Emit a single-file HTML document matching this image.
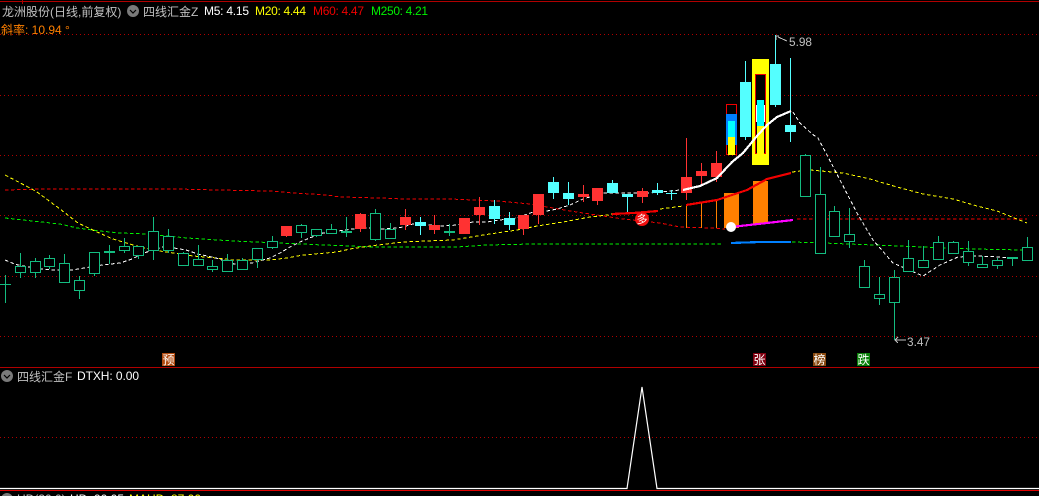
<!DOCTYPE html>
<html><head><meta charset="utf-8"><style>
html,body{margin:0;padding:0;background:#000;width:1039px;height:496px;overflow:hidden}
svg{display:block;position:absolute;left:0;top:0}
text{font-family:"Liberation Sans","WenQuanYi Zen Hei","Noto Sans CJK SC",sans-serif;font-size:12px}
.c{shape-rendering:crispEdges}
.d{fill:none;stroke:#b00000;stroke-width:1;stroke-dasharray:1 3}
.m{fill:none;stroke-width:1;stroke-dasharray:3.5 2.5;shape-rendering:crispEdges}
.s{fill:none;stroke-width:2.2;stroke-linejoin:round}
</style></head><body>
<svg width="1039" height="496" viewBox="0 0 1039 496">
<g class="c">
<path d="M0 1.5H1039" stroke="#b00000" fill="none"/>
<path d="M22.5 0V4" stroke="#b00000" fill="none"/>
<path class="d" d="M0 34.5H1039M0 95.5H1039M0 155.5H1039M0 215.5H1039M0 276.5H1039M0 336.5H1039M0 437.5H1039"/>
<path d="M0 367.5H1039" stroke="#b00000" fill="none"/>
<path d="M0 490.5H1039" stroke="#e00000" fill="none" stroke-width="1"/>
</g>
<polyline class="m" stroke="#f00000" points="5,190 42,189 117,189 177,189 217,190 270,191 293,193 327,195 340,197 380,198 403,199 450,199 497,201 530,204 547,207 570,211 610,217 623,219 660,223 680,227 710,228 725,229"/>
<polyline class="m" stroke="#f00000" points="797,219 860,219 957,219 990,219 1027,219"/>
<polyline class="m" stroke="#00f000" points="5,218 23,220 60,224 77,228 100,231 120,233 147,234 187,238 233,241 280,243 323,245 353,246 370,247 457,247 487,245 533,244 610,244 723,244"/>
<polyline class="m" stroke="#00f000" points="792,242 823,243 873,245 923,247 973,249 1023,250"/>
<polyline class="m" stroke="#ffff00" points="5,175 30,188 37,192 60,209 78,223 97,232 113,239 133,245 153,250 173,253 193,256 217,258 233,260 263,260 270,260 287,258 303,255 337,252 350,249 370,246 403,242 427,241 453,240 483,235 517,230 537,226 563,222 590,217 608,215 612,214"/>
<polyline class="m" stroke="#ffff00" points="660,209 683,206"/>
<polyline class="m" stroke="#ffff00" points="792,172 810,170 843,173 870,179 897,187 923,194 953,199 977,206 997,211 1027,223"/>
<polyline class="m" stroke="#ffffff" stroke-dasharray="3 3" points="5,260 12,263 18,265 29,267 42,269 54,270 72,270 84,268 102,265 120,263 132,259 144,253 162,247 174,248 186,250 198,254 216,258 234,264 252,263 270,258 282,252 288,248 300,242 312,237 323,233 353,229 367,228 383,229 397,228 403,227 413,224 443,226 457,225 473,222 487,222 500,220 517,218 533,212 547,211 557,209 570,205 583,199 603,193 620,193 650,193 680,190"/>
<polyline class="m" stroke="#ffffff" stroke-dasharray="2 4" points="793,112 800,123 812,134 818,138 827,155 840,180 857,213 873,240 893,263 923,276 940,265 958,257 977,256 1000,257 1020,259"/>
<g class="c">
<!-- orange bars -->
<path d="M686.5 205V228M701.5 202V228M716.5 200V228" stroke="#ff8000" fill="none"/>
<rect x="724" y="193" width="15" height="35" fill="#ff8000"/>
<rect x="753" y="181" width="15" height="43" fill="#ff8000"/>
<!-- green wicks -->
<path fill="none" stroke="#14bc80" d="M5.5 275V303M20.5 253V278M35.5 258V278M49.5 255V269M64.5 254V282M79.5 276V299M94.5 252V276M109.5 245V264M124.5 238V253M138.5 246V259M153.5 217V260M168.5 229V253M183.5 252V266M198.5 245V265M212.5 260V272M227.5 254V272M242.5 258V269M257.5 248V268M272.5 236V249M301.5 224V238M316.5 229V237M331.5 224V234M346.5 217V237M375.5 209V241M390.5 223V238M449.5 224V236M805.5 154V196M820.5 167V253M834.5 206V237M849.5 208V248M864.5 260V287M879.5 277V305M894.5 270V340M908.5 240V271M923.5 246V267M938.5 236V259M953.5 241V254M968.5 241V266M982.5 256V267M997.5 258V269M1012.5 257V266M1027.5 237V260"/>
<path d="M0 284.5H11" stroke="#14bc80"/>
<g fill="#000" stroke="#14bc80">
<rect x="15.500" y="266.500" width="10" height="6"/><rect x="30.500" y="261.500" width="10" height="11"/><rect x="44.500" y="258.500" width="10" height="8"/><rect x="59.500" y="263.500" width="10" height="19"/><rect x="74.500" y="280.500" width="10" height="10"/><rect x="89.500" y="252.500" width="10" height="21"/><rect x="119.500" y="246.500" width="10" height="4"/><rect x="133.500" y="246.500" width="10" height="9"/><rect x="148.500" y="231.500" width="10" height="19"/><rect x="163.500" y="236.500" width="10" height="14"/><rect x="178.500" y="253.500" width="10" height="12"/><rect x="193.500" y="259.500" width="10" height="6"/><rect x="207.500" y="266.500" width="10" height="3"/><rect x="222.500" y="260.500" width="10" height="11"/><rect x="237.500" y="260.500" width="10" height="9"/><rect x="252.500" y="248.500" width="10" height="11"/><rect x="267.500" y="241.500" width="10" height="6"/>
<rect x="296.500" y="225.500" width="10" height="7"/><rect x="311.500" y="229.500" width="10" height="6"/><rect x="326.500" y="229.500" width="10" height="4"/><rect x="370.500" y="213.500" width="10" height="26"/><rect x="385.500" y="229.500" width="10" height="9"/>
<rect x="800.500" y="155.500" width="10" height="41"/><rect x="815.500" y="194.500" width="10" height="59"/><rect x="829.500" y="211.500" width="10" height="25"/><rect x="844.500" y="234.500" width="10" height="7"/><rect x="859.500" y="266.500" width="10" height="21"/><rect x="874.500" y="294.500" width="10" height="4"/><rect x="889.500" y="277.500" width="10" height="25"/><rect x="903.500" y="258.500" width="10" height="13"/><rect x="918.500" y="260.500" width="10" height="7"/><rect x="933.500" y="242.500" width="10" height="17"/><rect x="948.500" y="242.500" width="10" height="11"/><rect x="963.500" y="251.500" width="10" height="11"/><rect x="977.500" y="264.500" width="10" height="3"/><rect x="992.500" y="260.500" width="10" height="5"/>
<rect x="1022.500" y="247.500" width="10" height="13"/>
</g>
<g fill="#14bc80"><rect x="104" y="251" width="11" height="2"/><rect x="341" y="231" width="11" height="2"/><rect x="444" y="231" width="11" height="2"/><rect x="1007" y="257" width="11" height="2"/></g>
<!-- red -->
<path fill="none" stroke="#ff3232" d="M286.500 226V237M360.500 213V232M405.500 209V230M434.500 215V234M479.500 197V225M523.500 215V235M538.500 194V224M583.500 185V202M597.500 188V205M642.500 188V203M686.500 138V200M701.500 163V185M716.500 151V182"/>
<g fill="#ff3232"><rect x="281" y="226" width="11" height="10"/><rect x="355" y="214" width="11" height="15"/><rect x="400" y="217" width="11" height="8"/><rect x="429" y="225" width="11" height="5"/><rect x="459" y="218" width="11" height="16"/><rect x="474" y="207" width="11" height="8"/><rect x="518" y="215" width="11" height="14"/><rect x="533" y="194" width="11" height="21"/><rect x="578" y="194" width="11" height="3"/><rect x="592" y="188" width="11" height="13"/><rect x="637" y="191" width="11" height="6"/><rect x="681" y="177" width="11" height="16"/><rect x="696" y="171" width="11" height="5"/><rect x="711" y="163" width="11" height="14"/></g>
<!-- cyan -->
<path fill="none" stroke="#54ffff" d="M420.500 217V235M494.500 200V224M509.500 212V230M553.500 177V199M568.500 182V205M612.500 180V193M627.500 194V212M657.500 183V195M671.500 190V200M745.500 61V140M775.500 35V107M790.500 58V142"/>
<g fill="#54ffff"><rect x="415" y="222" width="11" height="4"/><rect x="489" y="206" width="11" height="13"/><rect x="504" y="218" width="11" height="7"/><rect x="548" y="182" width="11" height="11"/><rect x="563" y="193" width="11" height="6"/><rect x="607" y="183" width="11" height="10"/><rect x="622" y="194" width="11" height="3"/><rect x="652" y="190" width="11" height="3"/><rect x="666" y="193" width="11" height="1"/><rect x="740" y="82" width="11" height="55"/><rect x="770" y="64" width="11" height="41"/><rect x="785" y="125" width="11" height="7"/></g>
<!-- box 1 -->
<rect x="726.500" y="104.500" width="10" height="50" fill="#000" stroke="#f00000"/>
<rect x="726" y="114" width="11" height="31" fill="#0080ff"/>
<rect x="728" y="121" width="7" height="16" fill="#00ffff"/>
<rect x="728" y="137" width="7" height="18" fill="#ffff00"/>
<!-- box 2 -->
<rect x="752" y="59" width="17" height="106" fill="#ffff00"/>
<rect x="755.500" y="74.500" width="10" height="79" fill="#000" stroke="#f00000"/>
<rect x="756" y="105" width="9" height="17" fill="#ffffff"/>
<rect x="757" y="100" width="7" height="26" fill="#00ffff"/>
<rect x="757" y="126" width="7" height="28" fill="#ffff00"/>
</g>
<!-- solid lines -->
<polyline class="s c" stroke="#ffffff" points="683,190 700,186 717,178 732,162 743,153 757,136 767,125 777,117 791,111"/>
<polyline class="s c" stroke="#f00000" points="612,214 633,213 658,211"/>
<polyline class="s c" stroke="#f00000" points="686,205 717,200 747,190 767,179 791,173"/>
<polyline class="s c" stroke="#ff00ff" points="731,227 767,223 793,220"/>
<polyline class="s c" stroke="#0080ff" points="731,243 760,242 791,242"/>
<circle cx="731" cy="227" r="5" fill="#fff"/>
<circle cx="642" cy="219" r="7" fill="#f01010"/>
<text x="636.500" y="223" fill="#fff" style="font-size:11px">多</text>
<!-- markers -->
<path d="M776 36H779M776 36V40M778 37L787 41" stroke="#c0c0c0" fill="none" class="c"/>
<text x="789" y="46" fill="#c0c0c0" textLength="23" lengthAdjust="spacingAndGlyphs">5.98</text>
<path d="M895 340H906M895 340L898 337M895 340L898 343" stroke="#c0c0c0" fill="none" class="c"/>
<text x="907" y="346" fill="#c0c0c0" textLength="23" lengthAdjust="spacingAndGlyphs">3.47</text>
<!-- signal labels -->
<g class="c"><rect x="162" y="353" width="13" height="13" fill="#b04a10"/><rect x="753" y="353" width="13" height="13" fill="#800010"/><rect x="813" y="353" width="13" height="13" fill="#8a4a10"/><rect x="857" y="353" width="13" height="13" fill="#0a800a"/></g>
<text x="162.500" y="364" fill="#fff">预</text>
<text x="753.500" y="364" fill="#fff">张</text>
<text x="813.500" y="364" fill="#fff">榜</text>
<text x="857.500" y="364" fill="#fff">跌</text>
<!-- sub pane -->
<polyline points="0,488.500 627,488.500 642,387 657,488.500 1039,488.500" fill="none" stroke="#fff" stroke-width="1.200"/>
<!-- header -->
<text x="2" y="16" fill="#c0c0c0">龙洲股份(日线,前复权)</text>
<circle cx="133" cy="11" r="6" fill="#7a7a7a"/><path d="M130 10L133 13L136 10" stroke="#000" fill="none" stroke-width="1.200"/>
<text x="143" y="16" fill="#c0c0c0">四线汇金Z</text>
<text x="204" y="15" fill="#fff" textLength="45">M5: 4.15</text>
<text x="255" y="15" fill="#ffff00" textLength="51">M20: 4.44</text>
<text x="313" y="15" fill="#f00000" textLength="51">M60: 4.47</text>
<text x="371" y="15" fill="#00f000" textLength="57">M250: 4.21</text>
<text x="1" y="34" fill="#ff8000">斜率: 10.94 °</text>
<circle cx="7" cy="376" r="6" fill="#7a7a7a"/><path d="M4 375L7 378L10 375" stroke="#000" fill="none" stroke-width="1.200"/>
<text x="17" y="381" fill="#c0c0c0">四线汇金F</text>
<text x="77" y="380" fill="#fff" textLength="62">DTXH: 0.00</text>
<circle cx="7" cy="499" r="6" fill="#7a7a7a"/>
<text x="17" y="503" fill="#c0c0c0">HD(30,0)</text>
<text x="70" y="503" fill="#fff">HD: 90.05</text>
<text x="129" y="503" fill="#ffff00">MAHD: 87.00</text>
</svg>
</body></html>
